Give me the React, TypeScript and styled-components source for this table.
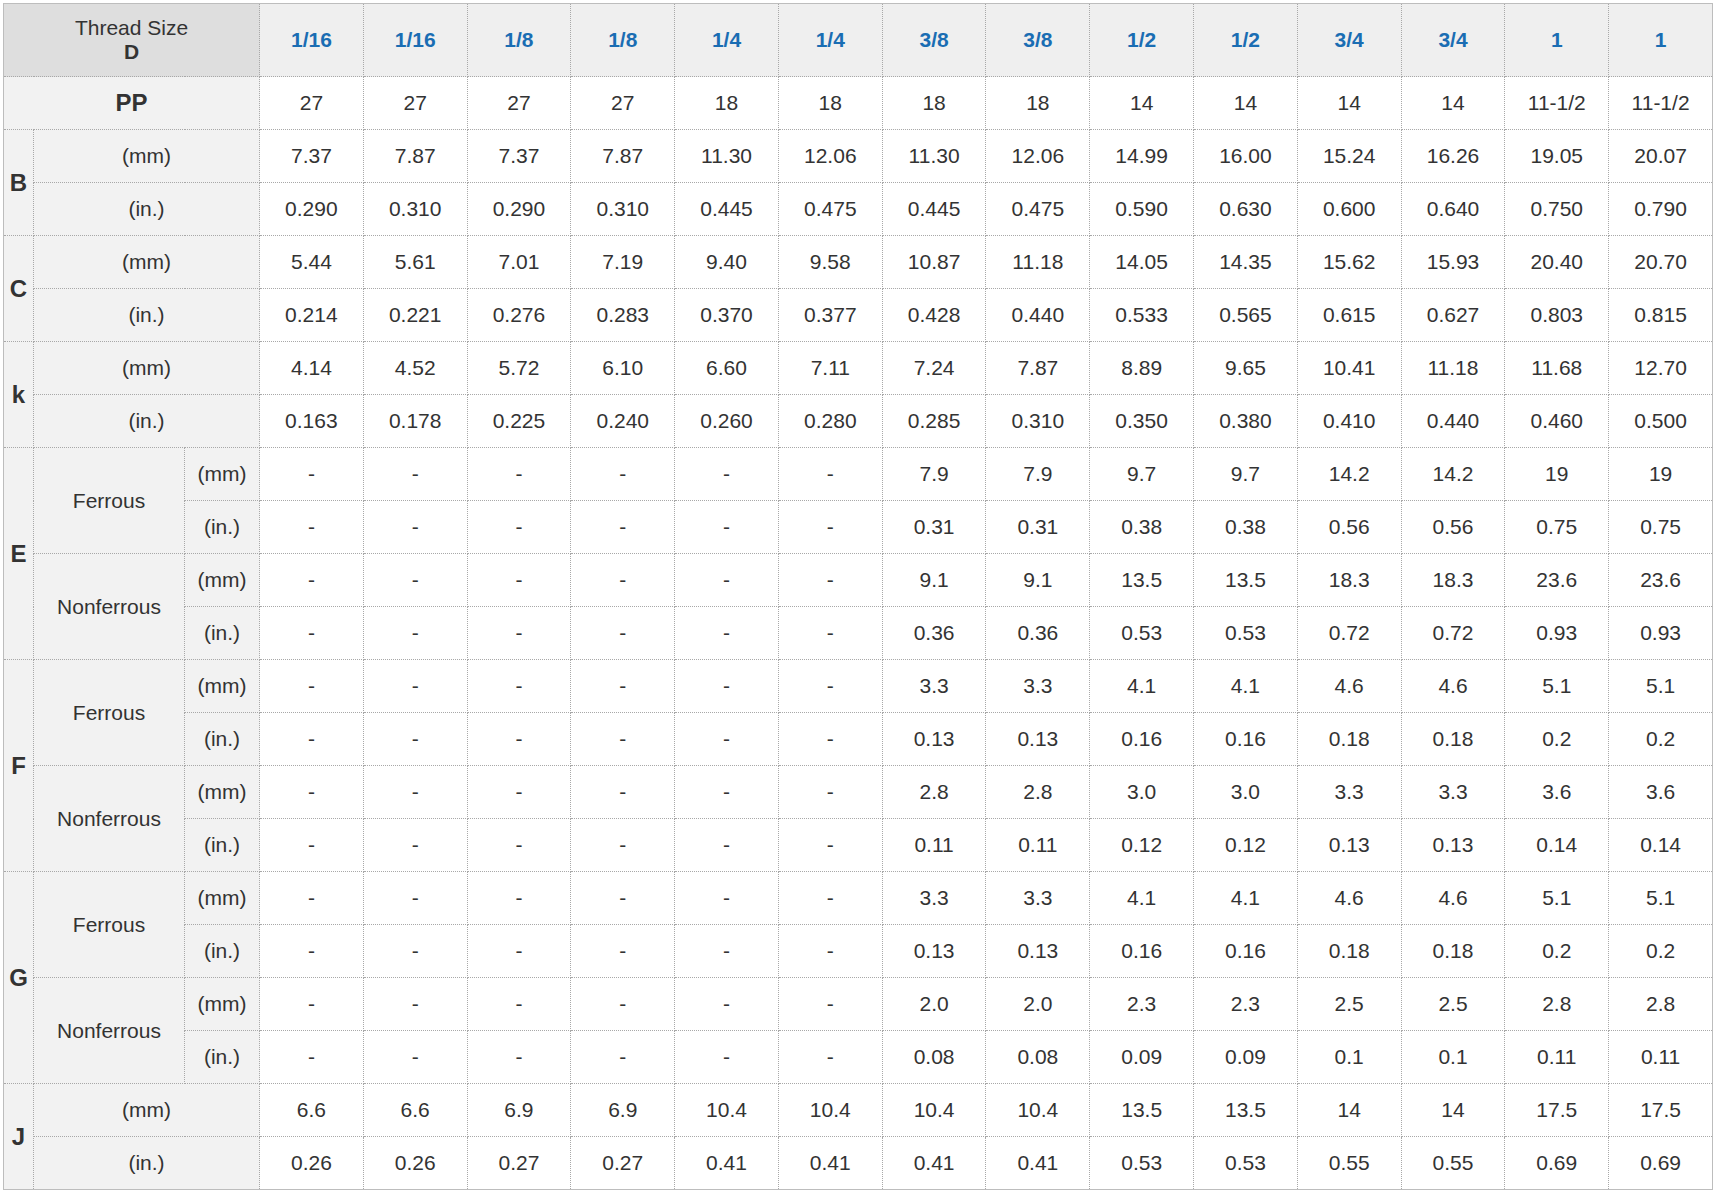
import React from 'react'
import styled, { createGlobalStyle } from 'styled-components'

const sizes = ['1/16', '1/16', '1/8', '1/8', '1/4', '1/4', '3/8', '3/8', '1/2', '1/2', '3/4', '3/4', '1', '1']
const pitch = ['27', '27', '27', '27', '18', '18', '18', '18', '14', '14', '14', '14', '11-1/2', '11-1/2']

const dash = ['-', '-', '-', '-', '-', '-']

type Pair = { mm: string[]; inch: string[] }
type Simple = { letter: string } & Pair
type Split = { letter: string; ferrous: Pair; nonferrous: Pair }

const simple: Simple[] = [
  {
    letter: 'B',
    mm: ['7.37', '7.87', '7.37', '7.87', '11.30', '12.06', '11.30', '12.06', '14.99', '16.00', '15.24', '16.26', '19.05', '20.07'],
    inch: ['0.290', '0.310', '0.290', '0.310', '0.445', '0.475', '0.445', '0.475', '0.590', '0.630', '0.600', '0.640', '0.750', '0.790'],
  },
  {
    letter: 'C',
    mm: ['5.44', '5.61', '7.01', '7.19', '9.40', '9.58', '10.87', '11.18', '14.05', '14.35', '15.62', '15.93', '20.40', '20.70'],
    inch: ['0.214', '0.221', '0.276', '0.283', '0.370', '0.377', '0.428', '0.440', '0.533', '0.565', '0.615', '0.627', '0.803', '0.815'],
  },
  {
    letter: 'k',
    mm: ['4.14', '4.52', '5.72', '6.10', '6.60', '7.11', '7.24', '7.87', '8.89', '9.65', '10.41', '11.18', '11.68', '12.70'],
    inch: ['0.163', '0.178', '0.225', '0.240', '0.260', '0.280', '0.285', '0.310', '0.350', '0.380', '0.410', '0.440', '0.460', '0.500'],
  },
]

const split: Split[] = [
  {
    letter: 'E',
    ferrous: {
      mm: [...dash, '7.9', '7.9', '9.7', '9.7', '14.2', '14.2', '19', '19'],
      inch: [...dash, '0.31', '0.31', '0.38', '0.38', '0.56', '0.56', '0.75', '0.75'],
    },
    nonferrous: {
      mm: [...dash, '9.1', '9.1', '13.5', '13.5', '18.3', '18.3', '23.6', '23.6'],
      inch: [...dash, '0.36', '0.36', '0.53', '0.53', '0.72', '0.72', '0.93', '0.93'],
    },
  },
  {
    letter: 'F',
    ferrous: {
      mm: [...dash, '3.3', '3.3', '4.1', '4.1', '4.6', '4.6', '5.1', '5.1'],
      inch: [...dash, '0.13', '0.13', '0.16', '0.16', '0.18', '0.18', '0.2', '0.2'],
    },
    nonferrous: {
      mm: [...dash, '2.8', '2.8', '3.0', '3.0', '3.3', '3.3', '3.6', '3.6'],
      inch: [...dash, '0.11', '0.11', '0.12', '0.12', '0.13', '0.13', '0.14', '0.14'],
    },
  },
  {
    letter: 'G',
    ferrous: {
      mm: [...dash, '3.3', '3.3', '4.1', '4.1', '4.6', '4.6', '5.1', '5.1'],
      inch: [...dash, '0.13', '0.13', '0.16', '0.16', '0.18', '0.18', '0.2', '0.2'],
    },
    nonferrous: {
      mm: [...dash, '2.0', '2.0', '2.3', '2.3', '2.5', '2.5', '2.8', '2.8'],
      inch: [...dash, '0.08', '0.08', '0.09', '0.09', '0.1', '0.1', '0.11', '0.11'],
    },
  },
]

const tail: Simple = {
  letter: 'J',
  mm: ['6.6', '6.6', '6.9', '6.9', '10.4', '10.4', '10.4', '10.4', '13.5', '13.5', '14', '14', '17.5', '17.5'],
  inch: ['0.26', '0.26', '0.27', '0.27', '0.41', '0.41', '0.41', '0.41', '0.53', '0.53', '0.55', '0.55', '0.69', '0.69'],
}

function Values({ list }: { list: string[] }) {
  return (
    <>
      {list.map((v, i) => (
        <Cell key={i}>{v}</Cell>
      ))}
    </>
  )
}

function SimpleRows({ row }: { row: Simple }) {
  return (
    <>
      <tr>
        <Label rowSpan={2} $bold>{row.letter}</Label>
        <Label colSpan={2}>(mm)</Label>
        <Values list={row.mm} />
      </tr>
      <tr>
        <Label colSpan={2}>(in.)</Label>
        <Values list={row.inch} />
      </tr>
    </>
  )
}

function SplitRows({ row }: { row: Split }) {
  return (
    <>
      <tr>
        <Label rowSpan={4} $bold>{row.letter}</Label>
        <Label rowSpan={2}>Ferrous</Label>
        <Label>(mm)</Label>
        <Values list={row.ferrous.mm} />
      </tr>
      <tr>
        <Label>(in.)</Label>
        <Values list={row.ferrous.inch} />
      </tr>
      <tr>
        <Label rowSpan={2}>Nonferrous</Label>
        <Label>(mm)</Label>
        <Values list={row.nonferrous.mm} />
      </tr>
      <tr>
        <Label>(in.)</Label>
        <Values list={row.nonferrous.inch} />
      </tr>
    </>
  )
}

export default function App() {
  return (
    <>
      <GlobalStyle />
      <Page>
        <Table>
          <colgroup>
            <col style={{ width: 30 }} />
            <col style={{ width: 151 }} />
            <col style={{ width: 75 }} />
          </colgroup>
          <thead>
            <HeadRow>
              <Corner colSpan={3}>
                Thread Size
                <br />
                <b>D</b>
              </Corner>
              {sizes.map((s, i) => (
                <SizeHead key={i}>{s}</SizeHead>
              ))}
            </HeadRow>
          </thead>
          <tbody>
            <tr>
              <Label colSpan={3} $bold>PP</Label>
              <Values list={pitch} />
            </tr>
            {simple.map((r) => (
              <SimpleRows key={r.letter} row={r} />
            ))}
            {split.map((r) => (
              <SplitRows key={r.letter} row={r} />
            ))}
            <SimpleRows row={tail} />
          </tbody>
        </Table>
      </Page>
    </>
  )
}

const GlobalStyle = createGlobalStyle`
  body {
    margin: 0;
    background: #fff;
    font-family: 'Liberation Sans', Arial, sans-serif;
    color: #333;
  }
`

const Page = styled.div`
  padding: 3px;
`

const Table = styled.table`
  width: 1710px;
  table-layout: fixed;
  border-collapse: collapse;
  border: 1px solid #bdbdbd;
  font-size: 21px;
  line-height: 24px;
  text-align: center;

  td,
  th {
    border: 1px dotted #a8a8a8;
    padding: 0;
    height: 52px;
    vertical-align: middle;
  }
`

const HeadRow = styled.tr`
  th {
    height: 72px;
  }
`

const Corner = styled.th`
  background: #dedede;
  font-weight: normal;
  color: #333;
  b {
    font-weight: bold;
  }
`

const SizeHead = styled.th`
  background: #efefef;
  color: #1a6db3;
  font-weight: bold;
`

const Label = styled.th<{ $bold?: boolean }>`
  background: #f2f2f2;
  font-weight: ${(p) => (p.$bold ? 'bold' : 'normal')};
  font-size: ${(p) => (p.$bold ? '24px' : '21px')};
  color: #333;
`

const Cell = styled.td`
  background: #fff;
`
